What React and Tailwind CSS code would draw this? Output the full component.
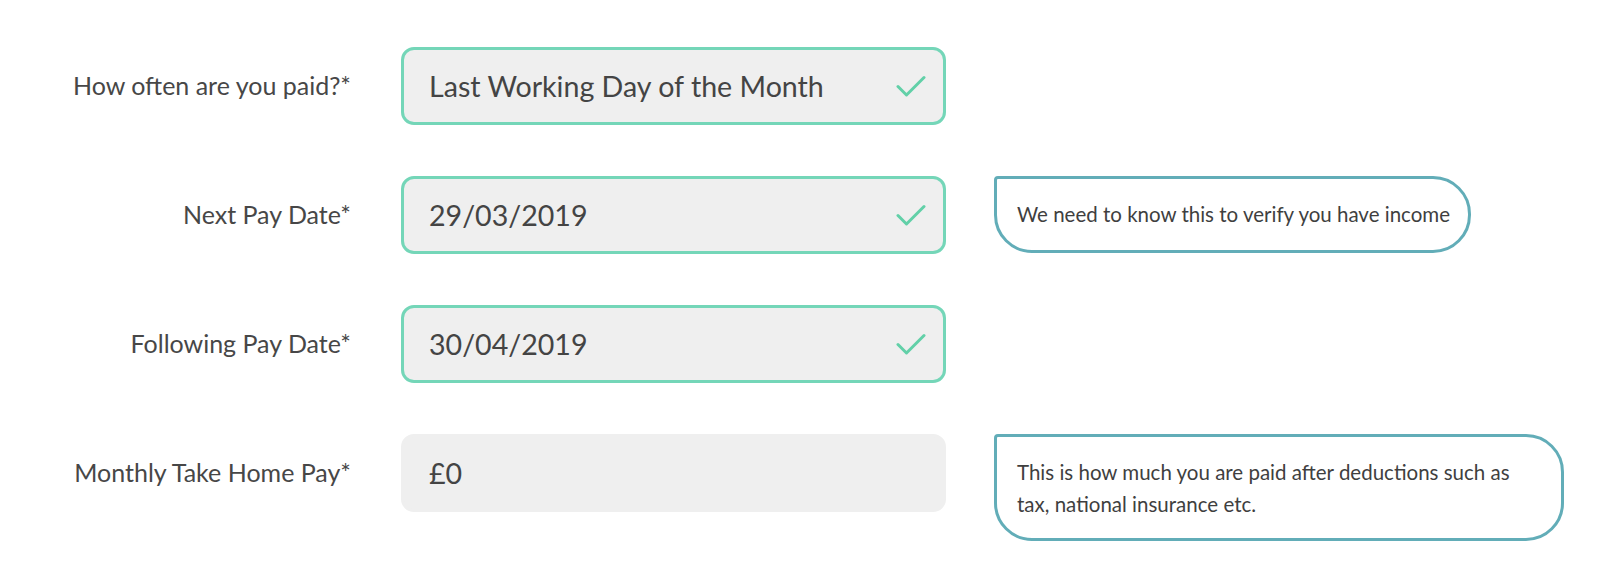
import React from "react";

function Check() {
  return (
    <svg width="30" height="22" viewBox="0 0 30 22" fill="none" className="shrink-0">
      <path d="M2 11.5 L10.5 20 L28 2.5" stroke="#62d0a8" strokeWidth="3" strokeLinecap="round" strokeLinejoin="round" />
    </svg>
  );
}

function Row({ label, value, valid, tip, tipWide }) {
  return (
    <div className="flex items-start">
      <div className="w-[351px] h-[78px] flex items-center justify-end text-[25px] text-[#474747]">
        {label}
      </div>
      <div
        className={
          "ml-[50px] w-[545px] h-[78px] rounded-[13px] bg-[#efefef] flex items-center justify-between pl-[25px] pr-[17px] text-[28.6px] text-[#444444] " +
          (valid ? "border-[3px] border-[#74d6b8]" : "border-[3px] border-[#efefef]")
        }
      >
        <span>{value}</span>
        {valid && <Check />}
      </div>
      {tip && (
        <div
          className={
            "ml-[48px] border-[3px] border-[#62adb8] bg-white rounded-tl-[4px] rounded-tr-[38px] rounded-br-[38px] rounded-bl-[38px] text-[20.5px] text-[#3f3f3f] flex items-center " +
            (tipWide ? "w-[570px] h-[107px] pl-[20px] pr-[40px] leading-[32px]" : "w-[477px] h-[77px] pl-[20px]")
          }
        >
          {tip}
        </div>
      )}
    </div>
  );
}

export default function App() {
  return (
    <div className="w-[1600px] h-[562px] bg-white pt-[47px] flex flex-col gap-[51px]" style={{ fontFamily: "Lato, 'Noto Sans', sans-serif" }}>
      <Row label="How often are you paid?*" value="Last Working Day of the Month" valid />
      <Row label="Next Pay Date*" value="29/03/2019" valid tip="We need to know this to verify you have income" />
      <Row label="Following Pay Date*" value="30/04/2019" valid />
      <Row
        label="Monthly Take Home Pay*"
        value="£0"
        tip="This is how much you are paid after deductions such as tax, national insurance etc."
        tipWide
      />
    </div>
  );
}
